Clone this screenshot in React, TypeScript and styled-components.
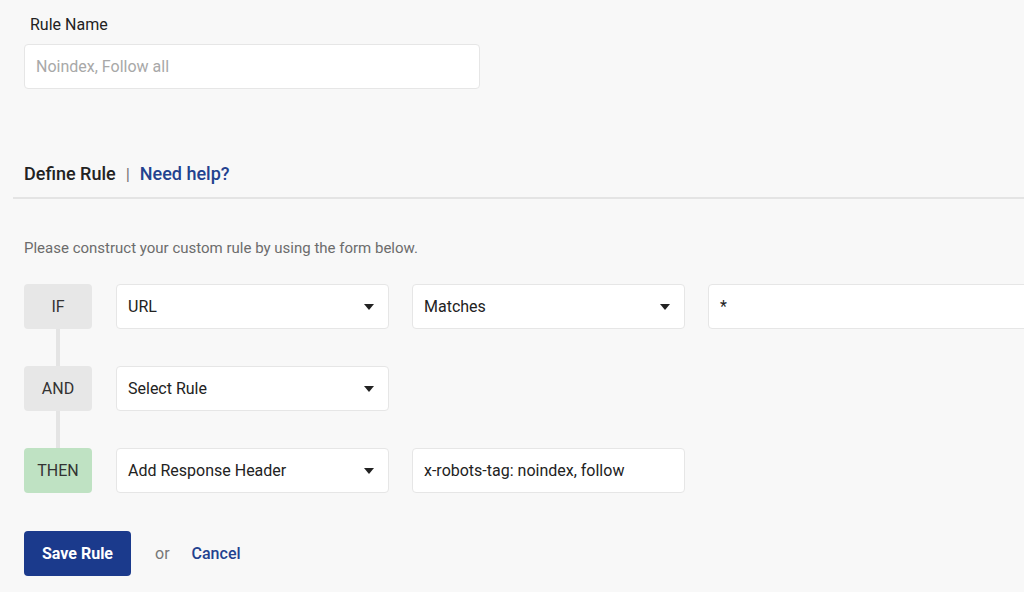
import React from "react"
import styled, { createGlobalStyle } from "styled-components"

const GlobalStyle = createGlobalStyle`
  html, body {
    margin: 0;
    padding: 0;
    background: #f8f8f8;
    overflow: hidden;
  }
  body {
    font-family: Roboto, "Liberation Sans", Arial, sans-serif;
    color: #222;
  }
`

const Page = styled.div`
  width: 1024px;
  height: 592px;
  padding: 15px 0 0 24px;
  box-sizing: border-box;
  overflow: hidden;
`

const Label = styled.div`
  font-size: 16px;
  line-height: 20px;
  color: #222;
  padding-left: 6px;
  margin-bottom: 9px;
`

const TextBox = styled.div<{ $width: number; $muted?: boolean }>`
  width: ${p => p.$width}px;
  height: 45px;
  box-sizing: border-box;
  background: #fff;
  border: 1px solid #e6e6e6;
  border-radius: 4px;
  display: flex;
  align-items: center;
  padding: 0 11px;
  font-size: 16px;
  color: ${p => (p.$muted ? "#a8a8a8" : "#222")};
  flex-shrink: 0;
`

const SectionHead = styled.div`
  margin-top: 73px;
  display: flex;
  align-items: center;
  gap: 10px;
  font-size: 18px;
  line-height: 24px;
  height: 24px;
`

const HeadTitle = styled.span`
  font-weight: 500;
  color: #222;
`

const HeadSep = styled.span`
  color: #777;
  font-size: 17px;
`

const HelpLink = styled.a`
  color: #23428f;
  font-weight: 500;
  text-decoration: none;
`

const Divider = styled.div`
  margin: 11px 0 0 -11px;
  height: 2px;
  background: #e4e4e4;
`

const Intro = styled.p`
  margin: 39px 0 0;
  font-size: 15px;
  line-height: 20px;
  color: #6c6c6c;
`

const Rows = styled.div`
  margin-top: 26px;
  display: flex;
  flex-direction: column;
`

const Row = styled.div`
  display: flex;
  align-items: center;
  gap: 24px;
`

const Connector = styled.div`
  width: 4px;
  height: 37px;
  margin-left: 32px;
  background: #e4e4e4;
`

const Badge = styled.div<{ $tone: "grey" | "green" }>`
  width: 68px;
  height: 45px;
  border-radius: 4px;
  display: flex;
  align-items: center;
  justify-content: center;
  font-size: 16px;
  color: #333;
  background: ${p => (p.$tone === "green" ? "#bfe2c3" : "#e7e7e7")};
  flex-shrink: 0;
`

const Fields = styled.div`
  display: flex;
  align-items: center;
  gap: 23px;
`

const SelectBox = styled(TextBox)`
  justify-content: space-between;
`

const Caret = styled.span`
  width: 0;
  height: 0;
  border-left: 5px solid transparent;
  border-right: 5px solid transparent;
  border-top: 6px solid #222;
  margin-right: 3px;
`

const Actions = styled.div`
  margin-top: 38px;
  display: flex;
  align-items: center;
`

const SaveButton = styled.button`
  width: 107px;
  height: 45px;
  background: #1b3a8c;
  color: #fff;
  border: none;
  border-radius: 4px;
  font-family: inherit;
  font-size: 16px;
  font-weight: 700;
  cursor: pointer;
`

const Or = styled.span`
  margin-left: 24px;
  font-size: 16px;
  color: #777;
`

const CancelLink = styled.a`
  margin-left: 22px;
  font-size: 16px;
  font-weight: 500;
  color: #23428f;
  text-decoration: none;
`

function Select({ value, width = 273 }: { value: string; width?: number }) {
  return (
    <SelectBox $width={width}>
      <span>{value}</span>
      <Caret />
    </SelectBox>
  )
}

export default function App() {
  return (
    <>
      <GlobalStyle />
      <Page>
        <Label>Rule Name</Label>
        <TextBox $width={456} $muted>
          Noindex, Follow all
        </TextBox>

        <SectionHead>
          <HeadTitle>Define Rule</HeadTitle>
          <HeadSep>|</HeadSep>
          <HelpLink href="#">Need help?</HelpLink>
        </SectionHead>
        <Divider />

        <Intro>Please construct your custom rule by using the form below.</Intro>

        <Rows>
          <Row>
            <Badge $tone="grey">IF</Badge>
            <Fields>
              <Select value="URL" />
              <Select value="Matches" />
              <TextBox $width={340}>*</TextBox>
            </Fields>
          </Row>
          <Connector />
          <Row>
            <Badge $tone="grey">AND</Badge>
            <Fields>
              <Select value="Select Rule" />
            </Fields>
          </Row>
          <Connector />
          <Row>
            <Badge $tone="green">THEN</Badge>
            <Fields>
              <Select value="Add Response Header" />
              <TextBox $width={273}>x-robots-tag: noindex, follow</TextBox>
            </Fields>
          </Row>
        </Rows>

        <Actions>
          <SaveButton>Save Rule</SaveButton>
          <Or>or</Or>
          <CancelLink href="#">Cancel</CancelLink>
        </Actions>
      </Page>
    </>
  )
}
